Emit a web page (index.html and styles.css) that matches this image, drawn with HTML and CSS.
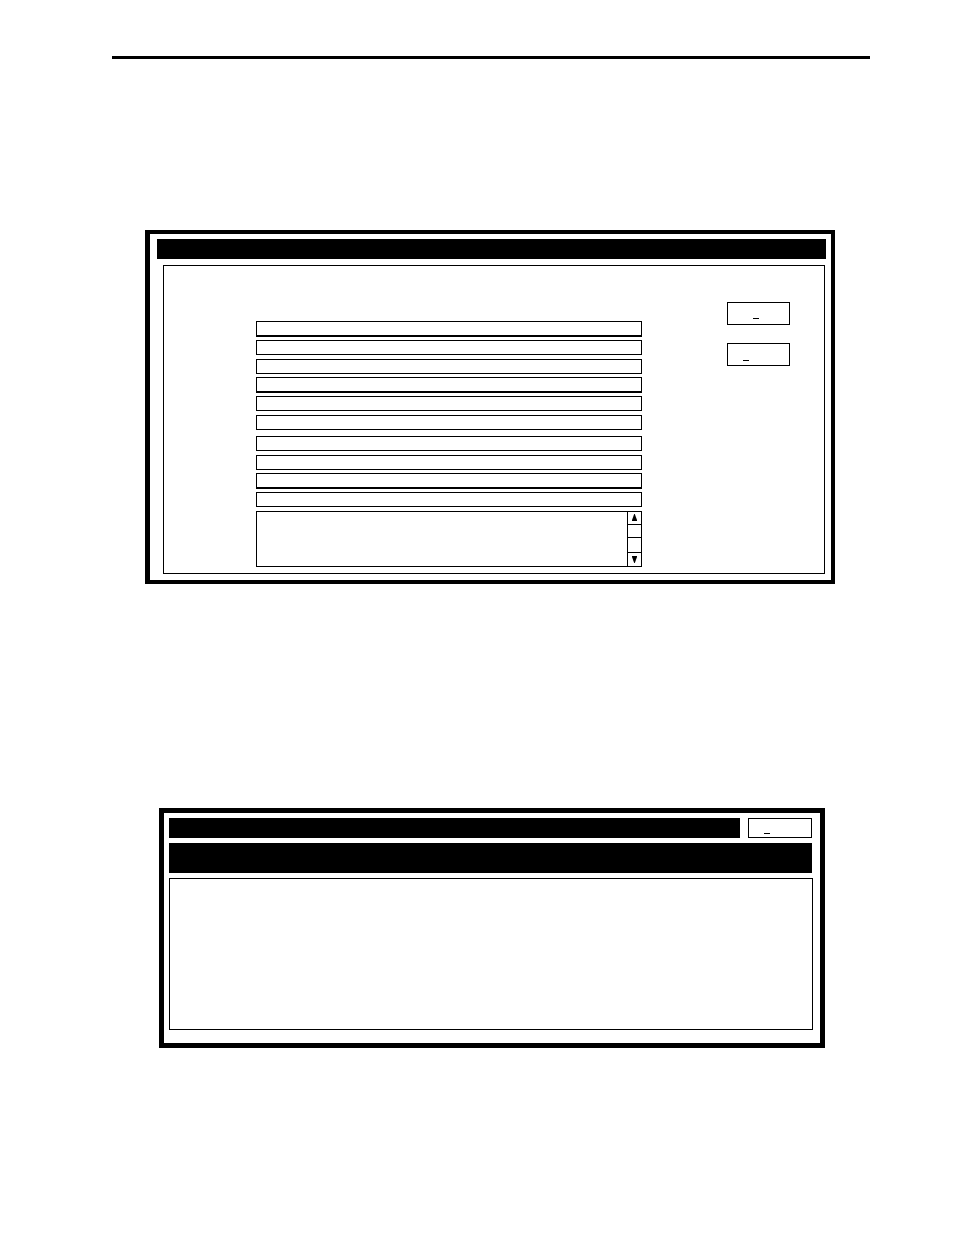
FILE: index.html
```html
<!DOCTYPE html>
<html lang="en">
<head>
<meta charset="utf-8">
<meta name="viewport" content="width=device-width, initial-scale=1">
<title>Form</title>
<link rel="stylesheet" href="styles.css">
</head>
<body>
<main class="page">
  <section class="window window-form">
    <header class="title-bar"></header>
    <form class="panel form-panel">
      <div class="fields">
        <input class="field heavy" type="text" aria-label="Field 1">
        <input class="field" type="text" aria-label="Field 2">
        <input class="field" type="text" aria-label="Field 3">
        <input class="field heavy" type="text" aria-label="Field 4">
        <input class="field" type="text" aria-label="Field 5">
        <input class="field" type="text" aria-label="Field 6">
        <input class="field group-start" type="text" aria-label="Field 7">
        <input class="field" type="text" aria-label="Field 8">
        <input class="field heavy" type="text" aria-label="Field 9">
        <input class="field" type="text" aria-label="Field 10">
        <div class="notes">
          <textarea class="notes-text" aria-label="Field 11"></textarea>
          <div class="scrollbar">
            <button class="scroll-button" type="button" aria-label="Scroll up">
              <svg class="arrow" viewBox="0 0 5 7"><path d="M2.2 0H2.8L5 6V7H0V6Z"/></svg>
            </button>
            <div class="scroll-cell"></div>
            <div class="scroll-cell"></div>
            <button class="scroll-button" type="button" aria-label="Scroll down">
              <svg class="arrow" viewBox="0 0 5 7"><path d="M0 0H5V1L2.8 7H2.2L0 1Z"/></svg>
            </button>
          </div>
        </div>
      </div>
      <div class="actions">
        <button class="button button-short" type="button" aria-label="Confirm"><span class="mnemonic"></span></button>
        <button class="button" type="button" aria-label="Cancel"><span class="mnemonic"></span></button>
      </div>
    </form>
  </section>

  <section class="window window-list">
    <header class="list-header">
      <div class="title-bar list-title"></div>
      <button class="button button-header" type="button" aria-label="Close"><span class="mnemonic"></span></button>
    </header>
    <div class="column-bar"></div>
    <div class="panel list-panel"></div>
  </section>
</main>
</body>
</html>
```

FILE: styles.css
```css
* {
  box-sizing: border-box;
}

body {
  margin: 0;
  background: #fff;
  color: #000;
  font-family: "Liberation Sans", Arial, sans-serif;
  font-size: 12px;
}

.page {
  margin: 56px 84px 0 112px;
  border-top: 3px solid #000;
}

.window {
  border: 5px solid #000;
}

.window-form {
  margin: 171px 35px 0 33px;
  border-width: 4px 4px 4px 5px;
  padding: 5px 5px 6px 7px;
}

.title-bar {
  height: 20px;
  background: #000;
}

.panel {
  border: 1px solid #000;
}

.form-panel {
  display: flex;
  align-items: flex-start;
  gap: 85px;
  margin: 6px 1px 0 6px;
  padding: 36px 34px 6px 92px;
}

.fields {
  display: flex;
  flex: 1;
  flex-direction: column;
  min-width: 0;
  padding-top: 19px;
}

.field {
  display: block;
  width: 100%;
  height: 15px;
  margin: 0 0 4px;
  padding: 0 4px;
  border: 1px solid #000;
  border-radius: 0;
  background: #fff;
  font: inherit;
}

.field.heavy {
  height: 16px;
  margin-top: -1px;
  margin-bottom: 3px;
  border-bottom-width: 2px;
}

.field.heavy:first-child {
  margin-top: 0;
}

.field.group-start {
  margin-top: 2px;
}

.notes {
  display: flex;
  height: 56px;
  border: 1px solid #000;
}

.notes-text {
  flex: 1;
  min-width: 0;
  padding: 2px 4px;
  border: 0;
  background: #fff;
  font: inherit;
  resize: none;
}

.scrollbar {
  display: grid;
  grid-template-rows: 12px 13px 15px 14px;
  width: 14px;
  border-left: 1px solid #000;
}

.scroll-button {
  display: flex;
  align-items: flex-start;
  justify-content: center;
  padding: 2px 0 0;
  border: 0;
  background: #fff;
}

.scroll-cell {
  border-top: 1px solid #000;
}

.scroll-cell ~ .scroll-button {
  padding-top: 3px;
  border-top: 1px solid #000;
}

.arrow {
  width: 5px;
  height: 7px;
}

.actions {
  display: flex;
  flex-direction: column;
  gap: 18px;
}

.button {
  display: flex;
  align-items: flex-end;
  width: 63px;
  height: 23px;
  padding: 0 0 4px 15px;
  border: 1px solid #000;
  border-radius: 0;
  background: #fff;
  font: inherit;
}

.button-short {
  padding: 0 0 5px 25px;
}

.mnemonic {
  width: 6px;
  height: 1px;
  background: #000;
}

.window-list {
  margin: 224px 45px 0 47px;
  padding: 5px 7px 13px 5px;
}

.list-header {
  display: flex;
  gap: 8px;
  margin-right: 1px;
}

.list-title {
  flex: 1;
}

.button-header {
  width: 64px;
  height: 20px;
  padding-bottom: 3px;
}

.column-bar {
  height: 30px;
  margin: 5px 1px 5px 0;
  background: #000;
}

.list-panel {
  min-height: 152px;
}
```
